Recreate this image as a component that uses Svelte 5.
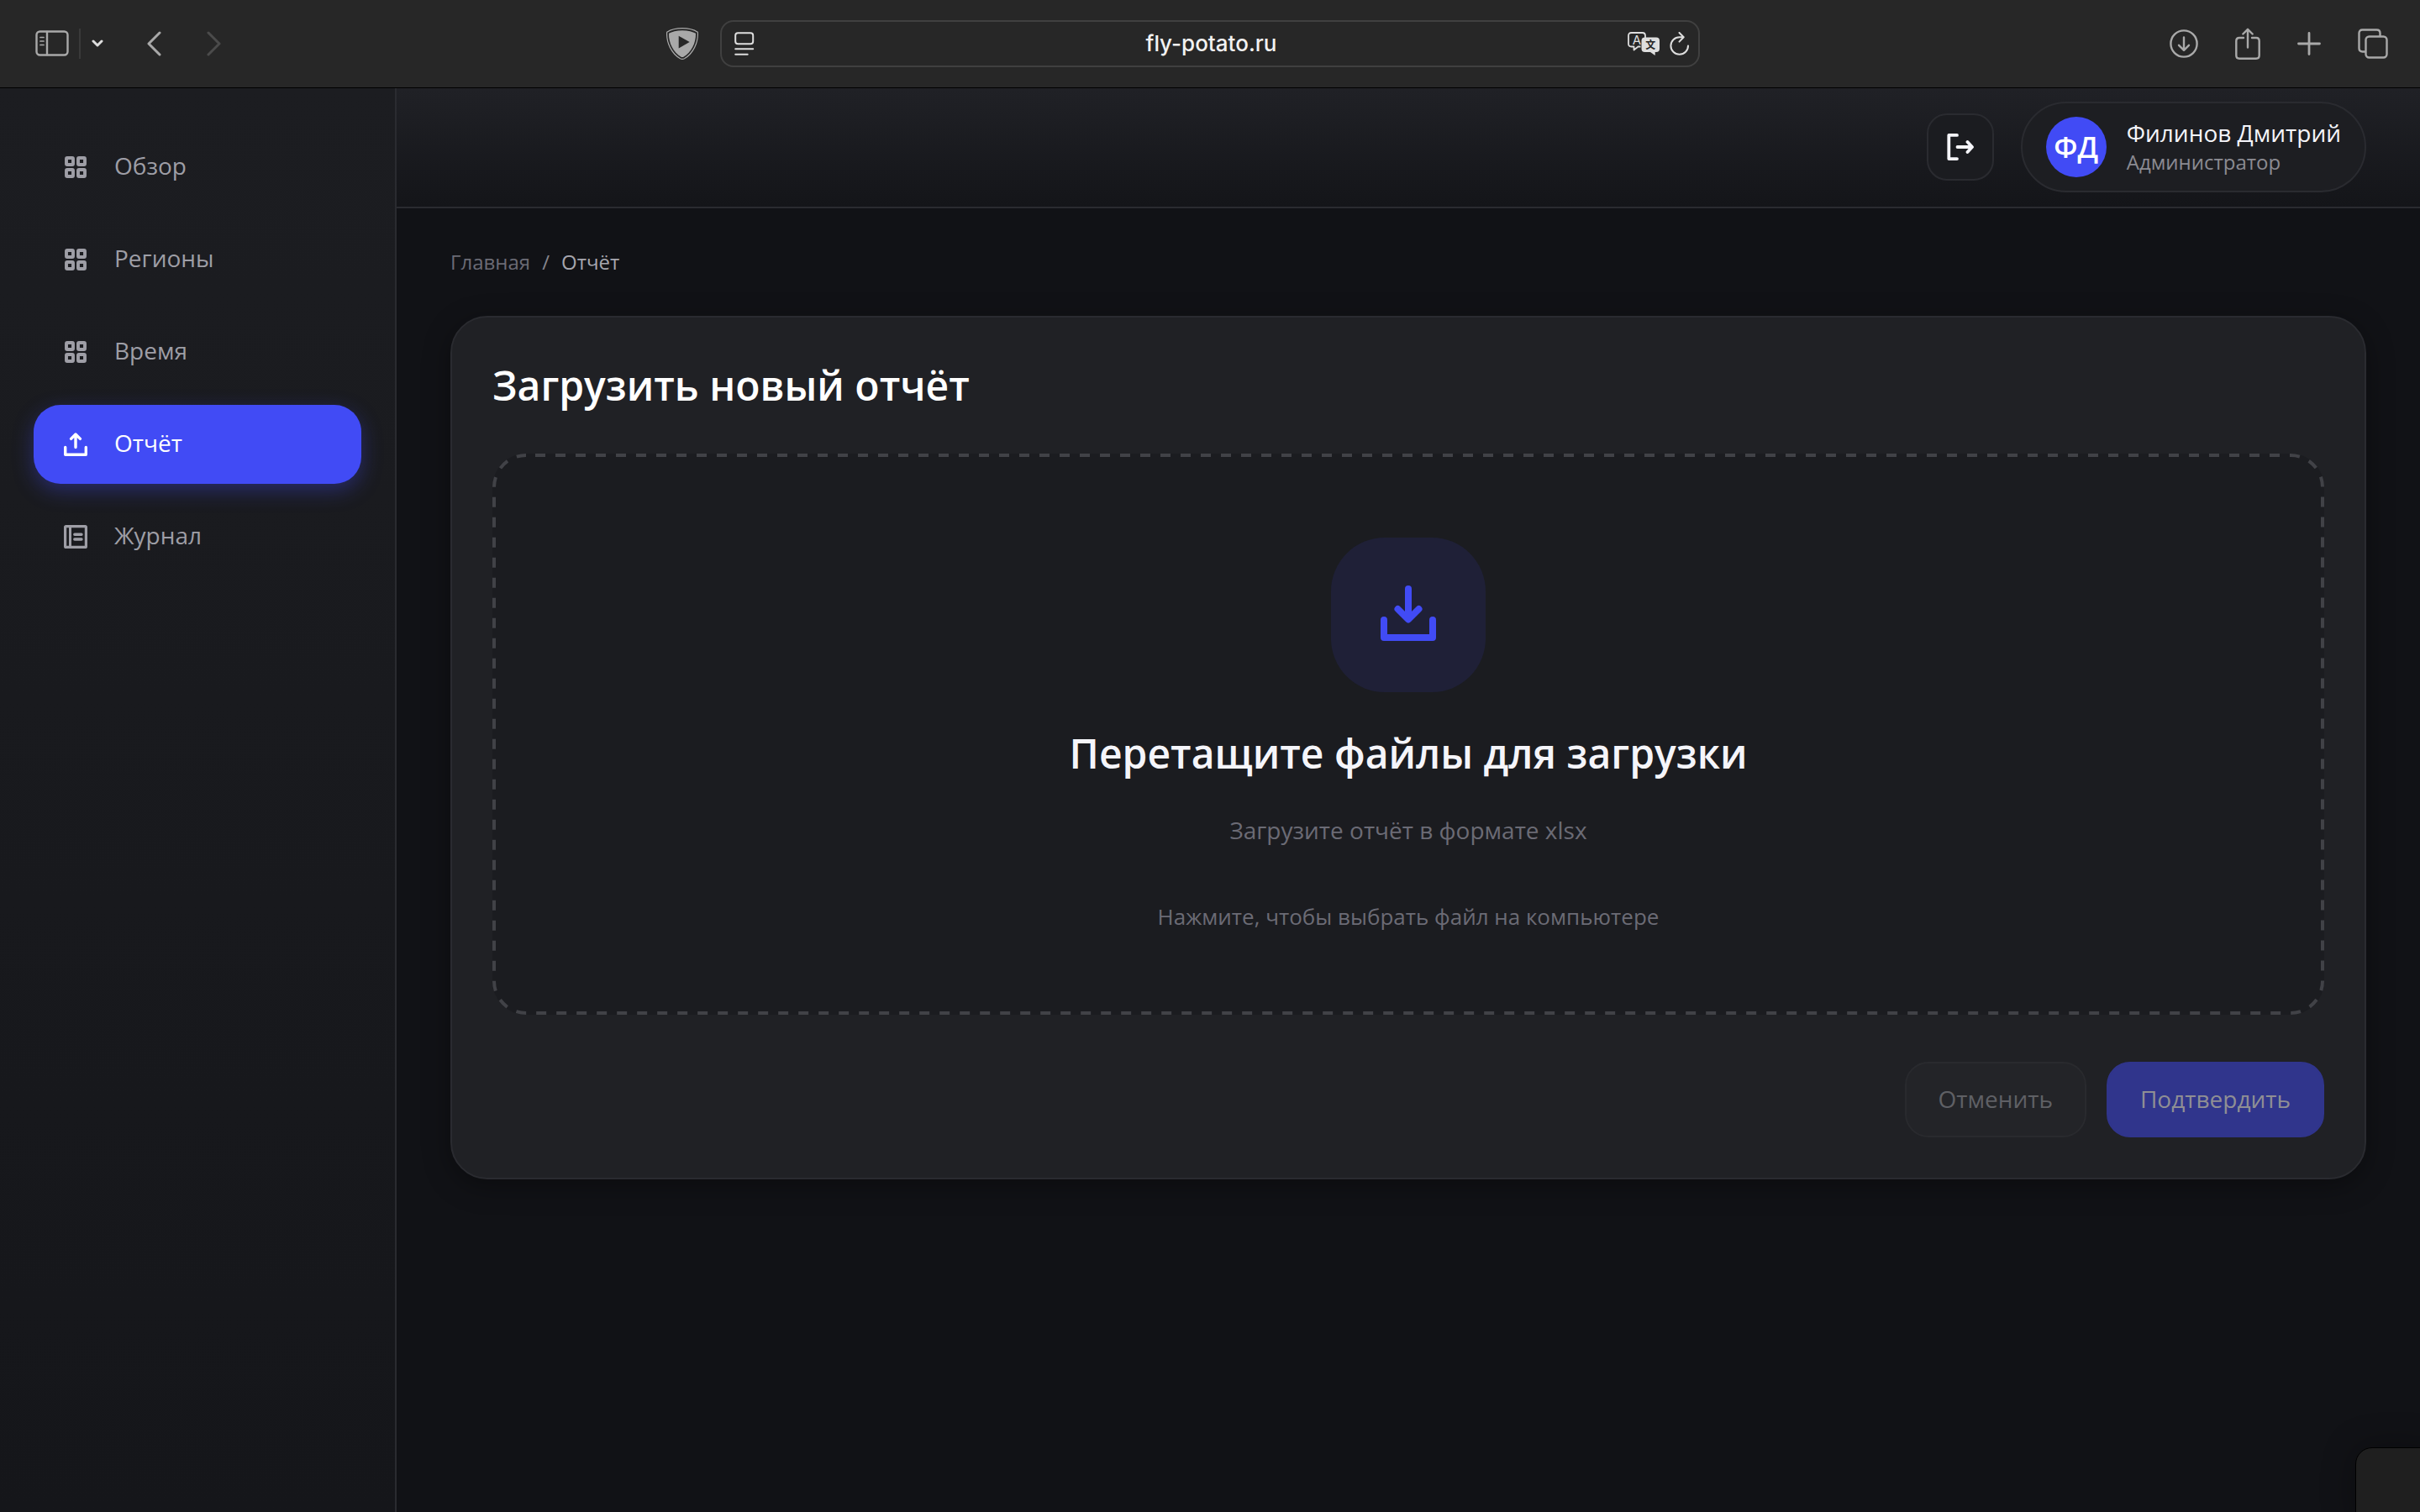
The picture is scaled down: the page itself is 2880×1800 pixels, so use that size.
<script lang="ts">
  type IconName = 'grid' | 'upload' | 'journal';

  const nav: { label: string; icon: IconName; href: string }[] = [
    { label: 'Обзор', icon: 'grid', href: '#overview' },
    { label: 'Регионы', icon: 'grid', href: '#regions' },
    { label: 'Время', icon: 'grid', href: '#time' },
    { label: 'Отчёт', icon: 'upload', href: '#report' },
    { label: 'Журнал', icon: 'journal', href: '#journal' }
  ];
  let active = $state('Отчёт');
  let address = $state('fly-potato.ru');
</script>

<div class="window">
  <div class="toolbar">
    <div class="tools-left">
      <div class="nav-tools">
        <button class="tool" aria-label="Боковая панель">
          <svg width="40" height="32" viewBox="0 0 40 32" fill="none" stroke="currentColor" stroke-width="2.4" stroke-linecap="round">
            <rect x="1.5" y="1.5" width="37" height="28" rx="4" />
            <path d="M14 2v27" />
            <path d="M6 8.500h4M6 13h4M6 17.500h4" stroke-width="1.700" />
          </svg>
        </button>
        <span class="divider"></span>
        <button class="tool bright" aria-label="Группы вкладок">
          <svg width="14" height="10" viewBox="0 0 14 10" fill="none" stroke="currentColor" stroke-width="3" stroke-linecap="round" stroke-linejoin="round">
            <path d="M2 2l5 5 5-5" />
          </svg>
        </button>
        <button class="tool back" aria-label="Назад">
          <svg width="17" height="30" viewBox="0 0 17 30" fill="none" stroke="currentColor" stroke-width="3" stroke-linecap="round" stroke-linejoin="round">
            <path d="M15 2L2 15l13 13" />
          </svg>
        </button>
        <button class="tool forward" aria-label="Вперёд">
          <svg width="17" height="30" viewBox="0 0 17 30" fill="none" stroke="currentColor" stroke-width="3" stroke-linecap="round" stroke-linejoin="round">
            <path d="M2 2l13 13L2 28" />
          </svg>
        </button>
      </div>
      <button class="tool" aria-label="Блокировщик рекламы">
        <svg width="38" height="38" viewBox="0 0 38 38">
          <path d="M19 .7C26.500 .7 33 2.500 37.300 5.200 38.300 18 31.500 31 21.500 36.700Q19 38 16.500 36.700C6.500 31 -.3 18 .7 5.200 5 2.500 11.500 .7 19 .7Z" fill="none" stroke="currentColor" stroke-width="1.200" />
          <path d="M19 3.200C26 3.200 31.500 4.700 35 6.800 35.500 18 29.500 29.500 20.500 34.700Q19 35.400 17.500 34.700C8.500 29.500 2.500 18 3 6.800 6.500 4.700 12 3.200 19 3.200Z" fill="currentColor" />
          <path d="M14.700 9.800v14.600l13-7.300z" fill="#272727" />
        </svg>
      </button>
    </div>

    <div class="address">
      <button class="tool bright" aria-label="Режим чтения">
        <svg width="24" height="28" viewBox="0 0 24 28" fill="none" stroke="currentColor" stroke-width="2" stroke-linecap="round">
          <rect x="1.200" y="1.200" width="21" height="13" rx="3" />
          <path d="M1.200 20.200h21M1.200 26.800h14.500" />
        </svg>
      </button>
      <input type="text" aria-label="Адрес" bind:value={address} />
      <button class="tool bright" aria-label="Перевести">
        <svg width="38" height="28" viewBox="0 0 38 28">
          <path d="M15.500 17.500h-3L7.500 21.500v-4H4.500Q1 17.500 1 14V4.500Q1 1 4.500 1h13Q21 1 21 4.500V7" fill="none" stroke="currentColor" stroke-width="1.800" stroke-linejoin="round" />
          <text x="11" y="14.500" text-anchor="middle" fill="currentColor" font-size="15" font-family="Inter, sans-serif">A</text>
          <path d="M20.500 6.500h13.500q4 0 4 4v9.500q0 4-4 4h-1.300v4L27 24h-6.500q-4 0-4-4v-9.500q0-4 4-4z" fill="currentColor" />
          <text x="27.300" y="20" text-anchor="middle" fill="#272727" font-size="12" font-weight="700" font-family="'Noto Sans CJK SC', sans-serif">文</text>
        </svg>
      </button>
      <button class="tool bright reload" aria-label="Обновить">
        <svg width="24" height="28" viewBox="0 0 24 28" fill="none" stroke="currentColor" stroke-width="2" stroke-linecap="round" stroke-linejoin="round">
          <path d="M22 16.500A10.300 10.300 0 1 1 11.700 6.200h4.800M11.500 1l5.200 5.200-5.200 5.400" />
        </svg>
      </button>
    </div>

    <div class="tools-right">
      <button class="tool" aria-label="Загрузки">
        <svg width="34" height="34" viewBox="0 0 34 34" fill="none" stroke="currentColor" stroke-width="2.400" stroke-linecap="round" stroke-linejoin="round">
          <circle cx="17" cy="17" r="15.600" />
          <path d="M17 9.500v15M11 18.800l6 6 6-6" />
        </svg>
      </button>
      <button class="tool" aria-label="Поделиться">
        <svg width="30" height="38" viewBox="0 0 30 38" fill="none" stroke="currentColor" stroke-width="2.400" stroke-linecap="round" stroke-linejoin="round">
          <path d="M10 12H5Q1.300 12 1.300 15.700V33Q1.300 36.700 5 36.700h20q3.700 0 3.700-3.700V15.700Q28.700 12 25 12h-5" />
          <path d="M15 23.500V2M9.300 7.500L15 1.800l5.700 5.700" />
        </svg>
      </button>
      <button class="tool" aria-label="Новая вкладка">
        <svg width="28" height="28" viewBox="0 0 28 28" fill="none" stroke="currentColor" stroke-width="2.800" stroke-linecap="round">
          <path d="M14 1.500v25M1.500 14h25" />
        </svg>
      </button>
      <button class="tool" aria-label="Обзор вкладок">
        <svg width="36" height="36" viewBox="0 0 36 36" fill="none" stroke="currentColor" stroke-width="2.400" stroke-linejoin="round">
          <rect x="9.500" y="9.500" width="25" height="25" rx="4" />
          <path d="M9 27.500H5.500q-4 0-4-4v-18q0-4 4-4h17q4 0 4 4V9" />
        </svg>
      </button>
    </div>
  </div>

  <div class="page">
    <aside>
      <nav aria-label="Разделы">
        {#each nav as item}
          <a
            href={item.href}
            class:active={active === item.label}
            aria-current={active === item.label ? 'page' : undefined}
            onclick={() => (active = item.label)}
          >
            <svg width="28" height="28" viewBox="0 0 28 28" fill="none" stroke="currentColor" stroke-width="3.400" stroke-linecap="round" stroke-linejoin="round">
              {#if item.icon === 'grid'}
                <g stroke-width="3.900">
                  <rect x="3" y="3" width="8" height="8" rx="1" />
                  <rect x="17" y="3" width="8" height="8" rx="1" />
                  <rect x="3" y="17" width="8" height="8" rx="1" />
                  <rect x="17" y="17" width="8" height="8" rx="1" />
                </g>
              {:else if item.icon === 'upload'}
                <path d="M1.700 17.500v8.800h24.600v-8.800M14 17.500V2.500M8.600 7.400L14 2l5.400 5.400" />
              {:else}
                <rect x="1.600" y="1.600" width="24.800" height="24.800" rx="1" stroke-width="3.200" />
                <path d="M7.500 2v24" stroke-width="3" />
                <path d="M12.800 11.200H21M12.800 17H21" stroke-width="3.400" />
              {/if}
            </svg>
            <span>{item.label}</span>
          </a>
        {/each}
      </nav>
    </aside>

    <div class="content">
      <header>
        <button class="logout" aria-label="Выйти">
          <svg width="32" height="32" viewBox="0 0 32 32" fill="none" stroke="currentColor" stroke-width="3.800" stroke-linecap="round" stroke-linejoin="round">
            <path d="M12 1.900H2.300v28.200H12M12.500 16h16M24.500 10l5.500 6-5.500 6" />
          </svg>
        </button>
        <button class="profile">
          <span class="avatar">ФД</span>
          <span class="who">
            <span class="name">Филинов Дмитрий</span>
            <span class="role">Администратор</span>
          </span>
        </button>
      </header>

      <main>
        <nav class="crumbs" aria-label="Навигация">
          <a href="#home">Главная</a>
          <span class="slash">/</span>
          <span class="current">Отчёт</span>
        </nav>

        <section class="card">
          <h1>Загрузить новый отчёт</h1>

          <label class="drop">
            <svg class="outline" aria-hidden="true">
              <rect width="100%" height="100%" rx="38" />
            </svg>
            <span class="tile">
              <svg width="66" height="70" viewBox="0 0 66 70" fill="none" stroke="currentColor" stroke-width="8" stroke-linecap="round" stroke-linejoin="round">
                <path d="M4 41v21h58V41M33 4v35M20.500 28L33 40.500 45.500 28" />
              </svg>
            </span>
            <span class="headline">Перетащите файлы для загрузки</span>
            <span class="format">Загрузите отчёт в формате xlsx</span>
            <span class="hint">Нажмите, чтобы выбрать файл на компьютере</span>
            <input type="file" accept=".xlsx" />
          </label>

          <div class="actions">
            <button class="cancel" disabled>Отменить</button>
            <button class="confirm" disabled>Подтвердить</button>
          </div>
        </section>
      </main>
    </div>
  </div>

  <div class="corner"></div>
</div>

<style>
  :global(body) {
    background: #111216;
    overflow: hidden;
  }
  .window {
    position: relative;
    display: flex;
    flex-direction: column;
    min-height: 100vh;
    overflow: hidden;
    font-family: 'Open Sans', 'Noto Sans', sans-serif;
    color: #f5f5fa;
  }
  button {
    font: inherit;
    color: inherit;
    background: none;
    border: 0;
    padding: 0;
  }
  a {
    color: inherit;
    text-decoration: none;
  }
  svg {
    display: block;
    flex: none;
  }

  /* Browser toolbar */
  .toolbar {
    display: grid;
    grid-template-columns: 1fr minmax(0, 1166px) 1fr;
    align-items: center;
    height: 104px;
    background: #272727;
    border-bottom: 1px solid #000;
    color: #a9a9a9;
  }
  .tools-left {
    display: flex;
    align-items: center;
    justify-content: space-between;
    padding: 0 26px 0 42px;
  }
  .nav-tools {
    display: flex;
    align-items: center;
  }
  .divider {
    width: 2px;
    height: 36px;
    margin: 0 13px 0 12px;
    background: #3a3a3a;
  }
  .bright {
    color: #dedede;
  }
  .back {
    margin-left: 52px;
  }
  .forward {
    margin-left: 54px;
    color: #4b4b4b;
  }
  .address {
    display: flex;
    align-items: center;
    box-sizing: border-box;
    height: 56px;
    padding: 0 10px 0 15px;
    border: 2px solid #404040;
    border-radius: 16px;
  }
  .address input {
    flex: 1;
    min-width: 0;
    padding: 0 0 0 48px;
    border: 0;
    outline: 0;
    background: none;
    color: #f2f2f2;
    font: 500 26px/36px Inter, sans-serif;
    text-align: center;
  }
  .reload {
    margin-left: 12px;
  }
  .tools-right {
    display: flex;
    align-items: center;
    justify-content: flex-end;
    gap: 44px;
    padding-right: 38px;
  }

  /* Application shell */
  .page {
    flex: 1;
    display: flex;
  }
  aside {
    box-sizing: border-box;
    width: 472px;
    flex: none;
    padding: 47px 40px;
    border-right: 2px solid #2a2b30;
    background: linear-gradient(#1c1d21, #15161a);
  }
  aside nav {
    display: flex;
    flex-direction: column;
    gap: 16px;
  }
  aside a {
    display: flex;
    align-items: center;
    gap: 32px;
    height: 94px;
    padding: 0 36px;
    border-radius: 32px;
    color: #9e9ea6;
    font-size: 28px;
    font-weight: 500;
  }
  aside a span {
    padding-bottom: 4px;
  }
  aside a.active {
    background: #414bf5;
    color: #fff;
    box-shadow: 0 8px 24px rgba(65, 75, 245, 0.35);
  }
  .content {
    flex: 1;
    min-width: 0;
    background: #111216;
  }
  header {
    display: flex;
    align-items: center;
    justify-content: flex-end;
    gap: 32px;
    padding: 16px 64px 17px;
    border-bottom: 2px solid #2a2b30;
    background: linear-gradient(#202126, #141519);
  }
  .logout {
    display: grid;
    place-items: center;
    width: 80px;
    height: 80px;
    border: 2px solid #2a2b30;
    border-radius: 24px;
    background: #1b1c20;
  }
  .profile {
    display: flex;
    align-items: center;
    gap: 24px;
    height: 108px;
    padding: 0 28px;
    border: 2px solid #2a2b30;
    border-radius: 54px;
    background: #1d1e22;
    text-align: left;
  }
  .avatar {
    display: grid;
    place-items: center;
    width: 72px;
    height: 72px;
    border-radius: 50%;
    background: #414bf5;
    color: #fff;
    font-size: 34px;
    font-weight: 600;
    line-height: 68px;
  }
  .who {
    display: flex;
    flex-direction: column;
  }
  .name {
    font-size: 28px;
    font-weight: 500;
    line-height: 36px;
  }
  .role {
    font-size: 24px;
    line-height: 34px;
    color: #8b8b92;
  }

  /* Report page */
  main {
    padding: 48px 64px;
  }
  .crumbs {
    display: flex;
    gap: 14px;
    margin-bottom: 48px;
    font-size: 24px;
    line-height: 32px;
    color: #6b6b75;
  }
  .slash {
    color: #85858d;
  }
  .current {
    color: #a6a6ae;
  }
  .card {
    padding: 48px;
    border: 2px solid #2a2b30;
    border-radius: 44px;
    background: #202125;
    box-shadow: 0 8px 32px rgba(0, 0, 0, 0.35);
  }
  h1 {
    margin: 0 0 48px;
    color: #fff;
    font-size: 48px;
    font-weight: 600;
    line-height: 66px;
  }
  .drop {
    position: relative;
    display: flex;
    flex-direction: column;
    align-items: center;
    padding: 100px;
    border-radius: 40px;
    background: #1b1c20;
    text-align: center;
  }
  .outline {
    position: absolute;
    inset: 2px;
    width: calc(100% - 4px);
    height: calc(100% - 4px);
    overflow: visible;
  }
  .outline rect {
    fill: none;
    stroke: #414247;
    stroke-width: 4px;
    stroke-dasharray: 12 12;
    stroke-dashoffset: -11;
  }
  .drop input {
    position: absolute;
    inset: 0;
    width: 100%;
    height: 100%;
    opacity: 0;
  }
  .tile {
    display: grid;
    place-items: center;
    width: 184px;
    height: 184px;
    border-radius: 64px;
    background: #1f2037;
    color: #414bf5;
  }
  .headline {
    margin-top: 40px;
    font-size: 48px;
    font-weight: 600;
    line-height: 66px;
  }
  .format {
    margin-top: 36px;
    font-size: 28px;
    line-height: 44px;
    color: #6b6b75;
  }
  .hint {
    margin-top: 64px;
    font-size: 26px;
    line-height: 34px;
    color: #6b6b75;
  }
  .actions {
    display: flex;
    justify-content: flex-end;
    gap: 24px;
    margin-top: 56px;
  }
  .actions button {
    height: 90px;
    padding: 0 38px 2px;
    border: 2px solid transparent;
    border-radius: 28px;
    font-size: 28px;
    font-weight: 500;
  }
  .actions .cancel {
    background: #232428;
    border-color: #292a2e;
    color: #5f6065;
  }
  .actions .confirm {
    background: #30358c;
    border-color: #30358c;
    color: #8f8f94;
  }

  /* Edge of the floating panel */
  .corner {
    position: absolute;
    right: -20px;
    bottom: -20px;
    width: 95px;
    height: 95px;
    border: 1px solid #000;
    border-radius: 20px;
    background: #1f1f1f;
    box-shadow: 0 0 40px rgba(0, 0, 0, 0.3);
  }
</style>
